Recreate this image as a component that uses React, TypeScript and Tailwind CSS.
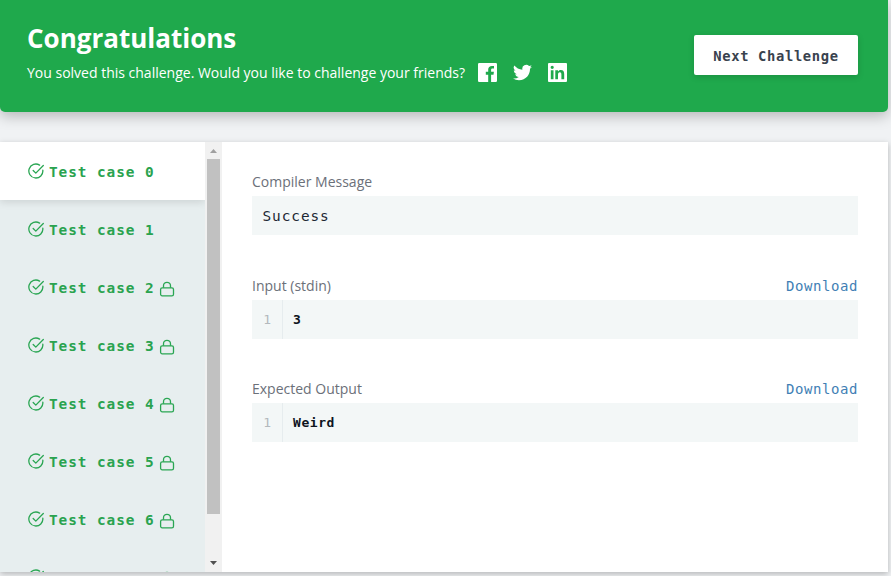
import React from "react";

const mono = "font-['DejaVu_Sans_Mono','Liberation_Mono',monospace]";

function CheckCircle() {
  return (
    <svg className="h-4 w-4 shrink-0" viewBox="0 0 16 16" fill="none" stroke="#2aa653" strokeWidth="1.3" strokeLinecap="round" strokeLinejoin="round">
      <path d="M14.8 7.2A7 7 0 1 1 11.6 2.1" />
      <path d="M5.2 7.5L7.8 10.1L15.3 2.5" />
    </svg>
  );
}

function Lock() {
  return (
    <svg className="ml-1 mt-[3px] h-4 w-4 shrink-0" viewBox="0 0 16 16" fill="none" stroke="#2aa653" strokeWidth="1.3" strokeLinejoin="round">
      <rect x="1.6" y="6.8" width="12.9" height="8" rx="1.6" />
      <path d="M4.5 6.7V4.8a3.5 3.5 0 0 1 7 0V6.7" />
    </svg>
  );
}

function SocialIcons() {
  return (
    <div className="ml-[12.5px] flex items-center gap-4 text-white">
      <svg className="h-[19px] w-[19px]" viewBox="0 0 19 19" fill="currentColor">
        <path d="M1.2 0H17.8Q19 0 19 1.2V17.8Q19 19 17.8 19H13.1V11.7H15.5L15.9 8.8H13.1V7C13.1 6.2 13.4 5.6 14.5 5.6H16V3.1C15.7 3 14.9 2.9 13.9 2.9C11.7 2.9 10.2 4.2 10.2 6.6V8.8H7.8V11.7H10.2V19H1.2Q0 19 0 17.8V1.2Q0 0 1.2 0Z" />
      </svg>
      <svg className="h-[19px] w-[19px]" viewBox="0 0 24 24" fill="currentColor">
        <path d="M24 4.6c-.9.4-1.8.7-2.8.8 1-.6 1.8-1.6 2.2-2.7-1 .6-2 1-3.1 1.2A4.9 4.9 0 0 0 11.9 8.4C7.7 8.2 4.1 6.2 1.7 3.2a4.9 4.9 0 0 0 1.5 6.6c-.8 0-1.6-.2-2.2-.6v.1c0 2.3 1.6 4.3 3.9 4.8-.7.2-1.5.2-2.2.1.6 1.9 2.4 3.3 4.6 3.4A9.9 9.9 0 0 1 0 19.6 13.9 13.9 0 0 0 7.5 21.8c9.1 0 14.2-7.7 14-14.6 1-.7 1.8-1.6 2.5-2.6z" />
      </svg>
      <svg className="h-[19px] w-[19px]" viewBox="0 0 19 19" fill="currentColor" fillRule="evenodd">
        <path d="M1 0H18Q19 0 19 1V18Q19 19 18 19H1Q0 19 0 18V1Q0 0 1 0ZM2.8 7.2V16.2H5.5V7.2ZM4.2 2.7A1.6 1.6 0 1 0 4.2 5.9A1.6 1.6 0 1 0 4.2 2.7ZM7.3 7.2V16.2H10V11.7C10 10.3 10.5 9.3 11.8 9.3C13.1 9.3 13.4 10.3 13.4 11.8V16.2H16.2V11.2C16.2 8.6 15.3 7 12.8 7C11.5 7 10.5 7.7 10 8.5V7.2Z" />
      </svg>
    </div>
  );
}

function TestCase({ index }: { index: number }) {
  const active = index === 0;
  return (
    <div className={`flex h-[58px] shrink-0 items-center pl-7 ${active ? "relative bg-white shadow-[0_2px_8px_rgba(0,0,0,0.12)]" : ""}`}>
      <CheckCircle />
      <span className={`ml-[5px] mt-0.5 whitespace-pre text-[14.4px] leading-5 font-bold tracking-[0.93px] text-[#2aa34f] ${mono}`}>
        {`Test case ${index}`}
      </span>
      {index > 1 && <Lock />}
    </div>
  );
}

function Scrollbar() {
  return (
    <div className="flex w-[17px] shrink-0 flex-col items-center bg-[#f1f1f1]">
      <div className="flex h-[17px] items-center justify-center">
        <svg className="h-1 w-[7px]" viewBox="0 0 7 4" fill="#a0a0a0"><path d="M0 4L3.5 0L7 4Z" /></svg>
      </div>
      <div className="h-[355px] w-[13px] bg-[#c1c1c1]" />
      <div className="mt-auto flex h-[18px] items-center justify-center">
        <svg className="h-1 w-[7px]" viewBox="0 0 7 4" fill="#505050"><path d="M0 0L3.5 4L7 0Z" /></svg>
      </div>
    </div>
  );
}

function Label({ text, download }: { text: string; download?: boolean }) {
  return (
    <div className="flex h-5 items-center justify-between text-sm text-[#6b7079]">
      <span>{text}</span>
      {download && (
        <span className={`text-[14px] tracking-[0.57px] text-[#3f7fb5] ${mono}`}>Download</span>
      )}
    </div>
  );
}

function CodeLine({ value }: { value: string }) {
  return (
    <div className={`mt-1 flex h-[39px] items-center bg-[#f3f7f7] text-[13px] font-bold tracking-[0.57px] ${mono}`}>
      <span className="flex h-full w-[31px] items-center justify-center border-r border-[#e6ecee] pt-px pl-px font-normal text-[#b3b9bd]">1</span>
      <span className="pl-[10px] pt-px text-[#0e141e]">{value}</span>
    </div>
  );
}

export default function App() {
  return (
    <div className="h-[576px] w-[891px] overflow-hidden bg-[#f0f2f4] font-['Open_Sans',sans-serif]">
      <header className="flex h-28 w-[888px] justify-between rounded-b-[5px] bg-[#1fa94c] pl-[27px] pr-[30px] text-white shadow-[0_4px_14px_rgba(0,0,0,0.25)]">
        <div className="pt-5">
          <h1 className="text-[26px] leading-9 font-bold">Congratulations</h1>
          <div className="mt-1.5 flex h-5 items-center">
            <p className="whitespace-nowrap pt-px text-sm">You solved this challenge. Would you like to challenge your friends?</p>
            <SocialIcons />
          </div>
        </div>
        <button className={`mt-[35px] h-10 w-[164px] rounded-[2px] bg-white pt-0.5 text-[13.8px] font-bold tracking-[0.65px] whitespace-nowrap text-[#39424e] shadow-[0_2px_6px_rgba(0,0,0,0.15)] ${mono}`}>
          Next Challenge
        </button>
      </header>

      <main className="mt-[30px] flex h-[430px] w-[888px] bg-white shadow-[0_2px_6px_rgba(0,0,0,0.25)]">
        <aside className="flex w-[205px] shrink-0 flex-col overflow-hidden bg-[#e7eeef]">
          {[0, 1, 2, 3, 4, 5, 6, 7].map((i) => (
            <TestCase key={i} index={i} />
          ))}
        </aside>
        <Scrollbar />
        <section className="flex-1 pl-[30px] pr-[30px] pt-[30px]">
          <Label text="Compiler Message" />
          <div className={`mt-1 flex h-[39px] items-center bg-[#f3f7f7] pl-[10.5px] pt-0.5 text-[14.4px] tracking-[0.93px] text-[#1c2733] ${mono}`}>Success</div>
          <div className="mt-[41px]">
            <Label text="Input (stdin)" download />
            <CodeLine value="3" />
          </div>
          <div className="mt-10">
            <Label text="Expected Output" download />
            <CodeLine value="Weird" />
          </div>
        </section>
      </main>
    </div>
  );
}
